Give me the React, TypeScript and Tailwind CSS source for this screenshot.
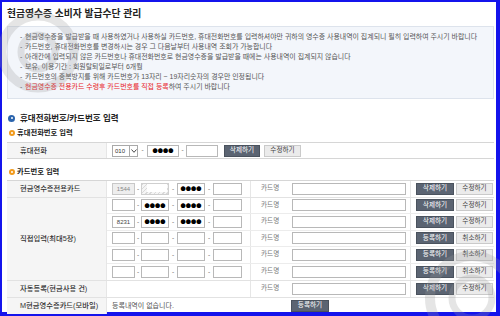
import React from 'react';

const notices = [
  '현금영수증을 발급받을 때 사용하였거나 사용하실 카드번호, 휴대전화번호를 입력하셔야만 귀하의 영수증 사용내역이 집계되니 필히 입력하여 주시기 바랍니다',
  '카드번호, 휴대전화번호를 변경하시는 경우 그 다음날부터 사용내역 조회가 가능합니다',
  '아래칸에 입력되지 않은 카드번호나 휴대전화번호로 현금영수증을 발급받을 때에는 사용내역이 집계되지 않습니다',
  '보유, 이용기간 : 회원탈퇴일로부터 6개월',
  '카드번호의 중복방지를 위해 카드번호가 13자리 ~ 19자리숫자의 경우만 인정됩니다',
];

type Cell = '' | 'dots' | string;

interface CardRow {
  a: Cell;
  b: Cell;
  c: Cell;
  d: Cell;
  registered: boolean;
}

const directRows: CardRow[] = [
  { a: '', b: 'dots', c: 'dots', d: '', registered: true },
  { a: '8231', b: 'dots', c: 'dots', d: '', registered: true },
  { a: '', b: '', c: '', d: '', registered: false },
  { a: '', b: '', c: '', d: '', registered: false },
  { a: '', b: '', c: '', d: '', registered: false },
];

const Dots = () => (
  <span className="font-['Noto_Sans_CJK_KR',sans-serif] text-[5.2px] leading-none text-black">●●●●</span>
);

const Box = ({ width, value }: { width: string; value: Cell }) => (
  <div className={`${width} h-[12px] border border-[#b8b8b8] bg-white flex items-center justify-center`}>
    {value === 'dots' ? <Dots /> : <span className="text-[6px] leading-none text-[#444]">{value}</span>}
  </div>
);

const Dash = ({ width }: { width: string }) => (
  <span className={`${width} text-center text-[6.5px] leading-none text-[#777]`}>-</span>
);

const DarkBtn = ({ label, width = 'w-[38px]' }: { label: string; width?: string }) => (
  <div className={`${width} h-[12px] bg-[#5b6472] border border-[#4a525d] flex items-center justify-center text-[6.6px] leading-none text-white`}>
    {label}
  </div>
);

const LightBtn = ({ label }: { label: string }) => (
  <div className="w-[37px] h-[12px] bg-[#ebebeb] border border-[#cacaca] flex items-center justify-center text-[6.6px] leading-none text-[#444]">
    {label}
  </div>
);

const NumberCells = ({ row, locked }: { row: CardRow; locked?: boolean }) => (
  <div className="w-[143px] flex items-center pl-[5px]">
    {locked ? (
      <div className="w-[23px] h-[12px] border border-[#c8c8c8] bg-[#eeeeee] flex items-center justify-center text-[6px] leading-none text-[#888]">
        1544
      </div>
    ) : (
      <Box width="w-[23px]" value={row.a} />
    )}
    <Dash width="w-[6px]" />
    {locked ? (
      <div className="w-[28px] h-[12px] border border-[#cfcfcf] bg-[repeating-linear-gradient(135deg,#d9d9d9_0px,#d9d9d9_1px,#f5f5f5_1px,#f5f5f5_3px)] flex items-start justify-end pr-[1px]">
        <div className="w-[20px] h-[8px] bg-white" />
      </div>
    ) : (
      <Box width="w-[28px]" value={row.b} />
    )}
    <Dash width="w-[8px]" />
    <Box width="w-[28px]" value={row.c} />
    <Dash width="w-[8px]" />
    <Box width="w-[29px]" value={row.d} />
  </div>
);

const NameCells = () => (
  <div className="w-[160px] self-stretch flex items-center pl-[10px] border-l border-[#e6e6e6]">
    <span className="w-[31px] text-[6.6px] leading-none text-[#777]">카드명</span>
    <div className="w-[114px] h-[12px] border border-[#b8b8b8] bg-white" />
  </div>
);

const ButtonCells = ({ registered }: { registered: boolean }) => (
  <div className="flex-1 self-stretch flex items-center gap-[2px] pl-[5px] border-l border-[#e6e6e6]">
    {registered ? (
      <>
        <DarkBtn label="삭제하기" />
        <LightBtn label="수정하기" />
      </>
    ) : (
      <>
        <DarkBtn label="등록하기" />
        <LightBtn label="취소하기" />
      </>
    )}
  </div>
);

const Label = ({ text }: { text: string }) => (
  <div className="w-[100px] shrink-0 self-stretch bg-[#f5f5f5] flex items-center pl-[13px] text-[7.3px] leading-none font-medium text-[#333] border-r border-[#e6e6e6] whitespace-nowrap">
    {text}
  </div>
);

export default function App() {
  return (
    <div className="relative w-[500px] h-[316px] overflow-hidden bg-[#1414ec] pt-[2px] pl-[2px] pr-[4px] pb-[4px] font-['Liberation_Sans','Noto_Sans_CJK_KR',sans-serif]">
      <div className="w-full h-full bg-white">
        {/* 타이틀 */}
        <div className="h-[24px] flex items-center pl-[5px]">
          <h1 className="text-[9.8px] leading-none font-bold text-[#222]">현금영수증 소비자 발급수단 관리</h1>
        </div>

        {/* 안내문 */}
        <div className="ml-[5px] mr-[2px] h-[73px] border border-[#dde3ec] bg-[#f3f6fb] pt-[5px] pl-[12px]">
          {notices.map((line) => (
            <p key={line} className="h-[10px] flex items-center text-[6.95px] leading-none text-[#555] whitespace-nowrap">
              <span className="w-[5px]">-</span>
              {line}
            </p>
          ))}
          <p className="h-[10px] flex items-center text-[6.95px] leading-none text-[#555] whitespace-nowrap">
            <span className="w-[5px]">-</span>
            <span className="text-[#e8211d]">현금영수증 전용카드 수령후 카드번호를 직접 등록</span>
            하여 주시기 바랍니다
          </p>
        </div>

        {/* 섹션 제목 */}
        <div className="mt-[13px] h-[12px] flex items-center pl-[6px] gap-[5px]">
          <span className="w-[7px] h-[7px] rounded-full bg-[#2b64ad] flex items-center justify-center">
            <span className="w-[2px] h-[2px] rounded-full bg-white" />
          </span>
          <h2 className="text-[8.5px] leading-none font-bold text-[#222]">휴대전화번호/카드번호 입력</h2>
        </div>

        <div className="mt-[4px] h-[10px] flex items-center pl-[7px] gap-[2px]">
          <span className="w-[6px] h-[6px] rounded-full border-[2px] border-[#f19a1c] bg-white" />
          <h3 className="text-[7.3px] leading-none font-bold text-[#222]">휴대전화번호 입력</h3>
        </div>

        {/* 휴대전화 */}
        <div className="mt-[4px] ml-[5px] mr-[2px] h-[17px] border-t border-b border-[#d6d6d6] flex items-center">
          <Label text="휴대전화" />
          <div className="flex items-center pl-[5px]">
            <div className="w-[26px] h-[12px] border border-[#a9a9a9] bg-white flex items-center">
              <span className="flex-1 pl-[2px] text-[6px] leading-none text-[#333]">010</span>
              <span className="w-[8px] h-full border-l border-[#a9a9a9] flex items-center justify-center">
                <svg width="6" height="4" viewBox="0 0 6 4">
                  <path d="M0.5 0.5 L3 3.3 L5.5 0.5" fill="none" stroke="#333" strokeWidth="0.9" />
                </svg>
              </span>
            </div>
            <Dash width="w-[9px]" />
            <Box width="w-[32px]" value="dots" />
            <Dash width="w-[7px]" />
            <Box width="w-[32px]" value="" />
            <div className="ml-[6px] flex gap-[4px]">
              <DarkBtn label="삭제하기" width="w-[36px]" />
              <LightBtn label="수정하기" />
            </div>
          </div>
        </div>

        <div className="mt-[8px] h-[10px] flex items-center pl-[7px] gap-[2px]">
          <span className="w-[6px] h-[6px] rounded-full border-[2px] border-[#f19a1c] bg-white" />
          <h3 className="text-[7.3px] leading-none font-bold text-[#222]">카드번호 입력</h3>
        </div>

        {/* 카드번호 테이블 */}
        <div className="mt-[3px] ml-[5px] mr-[2px] border-t border-[#d6d6d6]">
          <div className="h-[16.5px] flex items-center border-b border-[#e2e2e2]">
            <Label text="현금영수증전용카드" />
            <NumberCells row={{ a: '1544', b: '', c: 'dots', d: '', registered: true }} locked />
            <NameCells />
            <ButtonCells registered />
          </div>

          <div className="flex border-b border-[#e2e2e2]">
            <Label text="직접입력(최대5장)" />
            <div className="flex-1 flex flex-col">
              {directRows.map((row, i) => (
                <div
                  key={i}
                  className={`h-[16.5px] flex items-center ${i < directRows.length - 1 ? 'border-b border-[#ececec]' : ''}`}
                >
                  <NumberCells row={row} />
                  <NameCells />
                  <ButtonCells registered={row.registered} />
                </div>
              ))}
            </div>
          </div>

          <div className="h-[16.5px] flex items-center border-b border-[#e2e2e2]">
            <Label text="자동등록(현금사용 건)" />
            <div className="w-[143px]" />
            <NameCells />
            <ButtonCells registered />
          </div>

          <div className="h-[16.5px] flex items-center">
            <Label text="M현금영수증카드(모바일)" />
            <div className="w-[143px] pl-[5px] text-[7px] leading-none text-[#555] whitespace-nowrap">
              등록내역이 없습니다.
            </div>
            <div className="flex-1 self-stretch flex items-center pl-[41px]">
              <DarkBtn label="등록하기" />
            </div>
          </div>
        </div>
      </div>

      {/* 워터마크 */}
      <svg className="absolute inset-0 pointer-events-none" width="500" height="316" viewBox="0 0 500 316">
        <g fill="none" stroke="#9a9a9a" opacity="0.25">
          <circle cx="38" cy="52" r="36" strokeWidth="9" />
          <circle cx="38" cy="52" r="17" strokeWidth="7" />
          <circle cx="472" cy="298" r="42" strokeWidth="10" />
          <circle cx="472" cy="298" r="20" strokeWidth="7" />
        </g>
      </svg>
    </div>
  );
}
